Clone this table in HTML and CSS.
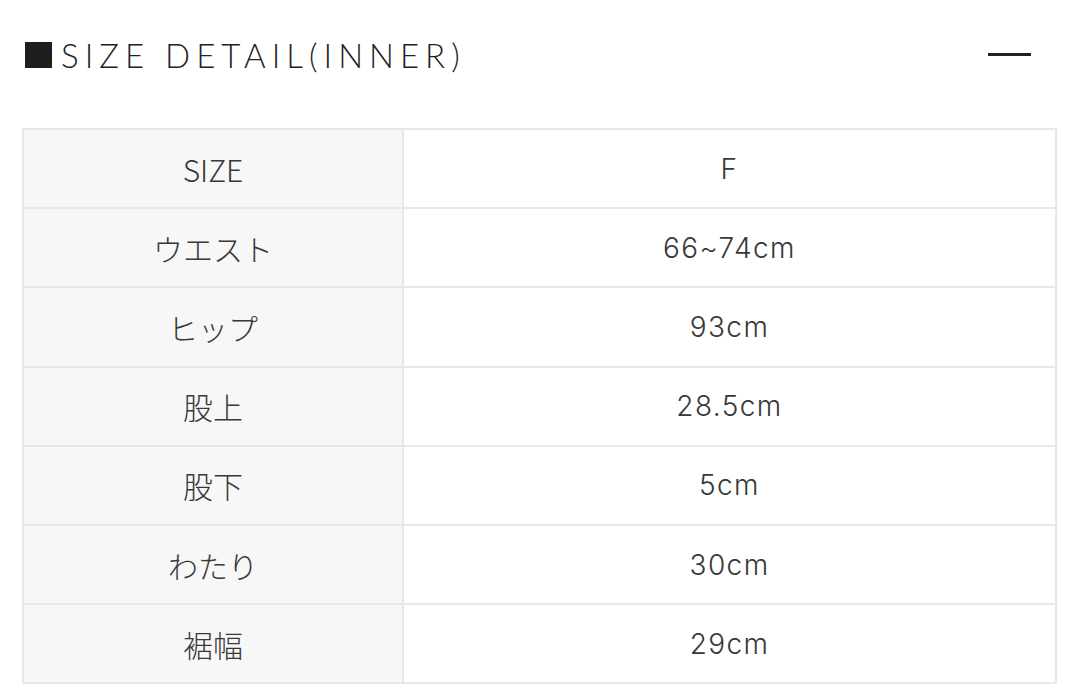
FILE: index.html
```html
<!DOCTYPE html>
<html lang="ja">
<head>
<meta charset="utf-8">
<link rel="stylesheet" href="styles.css">
</head>
<body>
<section class="detail">
  <header class="detail-head">
    <h2 class="detail-title"><span class="square"></span>SIZE DETAIL(INNER)</h2>
    <span class="toggle" aria-label="close"></span>
  </header>
  <table class="size-table">
    <tbody>
      <tr><th>SIZE</th><td>F</td></tr>
      <tr><th>ウエスト</th><td>66~74cm</td></tr>
      <tr><th>ヒップ</th><td>93cm</td></tr>
      <tr><th>股上</th><td>28.5cm</td></tr>
      <tr><th>股下</th><td>5cm</td></tr>
      <tr><th>わたり</th><td>30cm</td></tr>
      <tr><th>裾幅</th><td>29cm</td></tr>
    </tbody>
  </table>
</section>
</body>
</html>
```

FILE: styles.css
```css
html, body {
  margin: 0;
  padding: 0;
  background: #ffffff;
}

.detail {
  padding: 0 22px 0 22px;
}

.detail-head {
  display: flex;
  align-items: center;
  justify-content: space-between;
  height: 110px;
  padding: 0 27px 0 3px;
}

.detail-title {
  display: flex;
  align-items: center;
  margin: 0;
  font-family: Lato, "Noto Sans", sans-serif;
  font-weight: 300;
  font-size: 33px;
  letter-spacing: 6px;
  color: #222;
}

.square {
  display: inline-block;
  width: 27px;
  height: 26px;
  background: #1e1e1e;
  margin-right: 9px;
}

.toggle {
  display: block;
  width: 43px;
  height: 3px;
  background: #222;
  margin-top: -2px;
}

.size-table {
  width: 1035px;
  border-collapse: collapse;
  border: 2px solid #e8e8e8;
  margin-top: 18px;
}

.size-table th,
.size-table td {
  border: 2px solid #e8e8e8;
  height: 77.2px;
  padding: 0;
  text-align: center;
  vertical-align: middle;
  color: #383838;
}

.size-table th {
  width: 378px;
  background: #f7f7f7;
  font-family: "Noto Sans CJK JP", sans-serif;
  font-weight: 300;
  font-size: 30px;
}

.size-table td {
  background: #fff;
  font-family: Inter, "Noto Sans", sans-serif;
  font-weight: 300;
  font-size: 28px;
  letter-spacing: 1.4px;
}
```
